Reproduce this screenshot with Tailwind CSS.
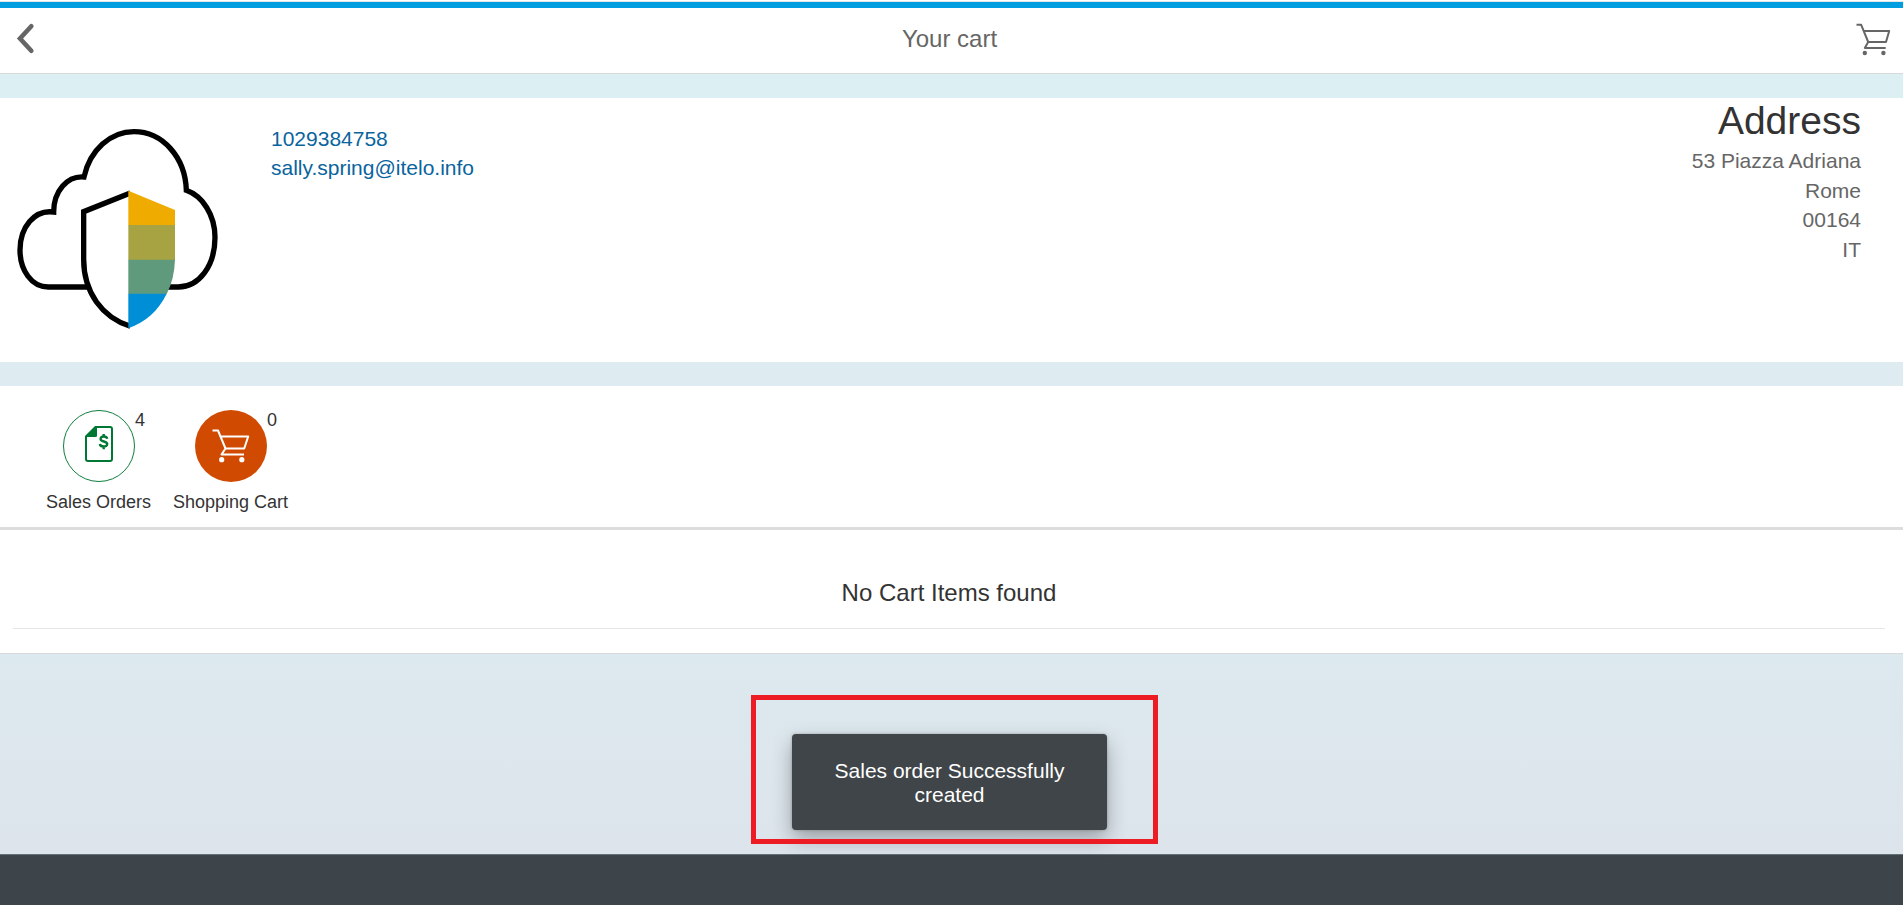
<!DOCTYPE html>
<html lang="en">
<head>
<meta charset="utf-8">
<title>Your cart</title>
<script src="https://cdn.jsdelivr.net/npm/@tailwindcss/browser@4"></script>
</head>
<body class="relative flex h-[905px] flex-col overflow-hidden bg-[#dde5ec] font-['Liberation_Sans',Arial,sans-serif] text-[21px] text-[#333333]">
  <div class="h-2 shrink-0 border-t border-white bg-[#009de0] shadow-[inset_0_1px_0_#e5e5e5]"></div>
  <header class="flex h-[66px] shrink-0 items-center justify-between border-b border-[#d9d9d9] bg-white pr-3 pl-4 text-[#666666]">
    <svg class="mb-[3px] h-[34px] w-[34px]" viewBox="0 0 34 34" fill="none" stroke="currentColor" stroke-width="4.6" stroke-linecap="round" stroke-linejoin="miter"><path d="M15.3 4.3 4 16.5 15.3 28.7"/></svg>
    <h1 class="relative -top-0.5 -left-[3px] text-2xl">Your cart</h1>
    <svg class="mb-[3px] h-[34px] w-[36px]" viewBox="0 0 36 34" fill="none" stroke="currentColor" stroke-width="2" stroke-linejoin="round"><path d="M1.5 2.8H6.2L13.2 20H31L34.2 9H9M13.2 20 9.8 26H30.7"/><g fill="currentColor" stroke="none"><circle cx="9.8" cy="31" r="2.2"/><circle cx="28.4" cy="31" r="2.2"/></g></svg>
  </header>
  <div class="h-6 shrink-0 bg-[#dceff2]"></div>
  <section class="flex h-[264px] shrink-0 bg-white pr-[42px]">
    <svg class="mt-3 h-[240px] w-[240px] shrink-0" viewBox="0 0 720 720">
      <g fill="none" stroke="#000" stroke-width="16">
        <path d="M263 531H145C94 531 60 480 60 420C60 352 103 298 161 306C161 244 201 197 252 201C270 119 332 65 402 65C488 65 556 142 559 241C607 258 645 314 645 382C645 468 597 531 535 531H500"/>
        <path fill="#fff" d="M391 249 251 305V448C251 548 307 622 391 649"/>
      </g>
      <path fill="#f0ab00" d="M385 242 525 300V346H385Z"/>
      <path fill="#a8a342" d="M385 345H525V450H385Z"/>
      <path fill="#609a7d" d="M385 449H525Q523 508 500 552H385Z"/>
      <path fill="#008fd6" d="M385 551H500C475 603 436 636 385 655Z"/>
    </svg>
    <div class="mt-[26px] ml-[31px] flex flex-col leading-[29px] text-[#0a649d]">
      <a>1029384758</a>
      <a>sally.spring@itelo.info</a>
    </div>
    <address class="ml-auto text-right leading-[29.6px] text-[#666666] not-italic">
      <h2 class="h-12 text-[39px] leading-[45px] text-[#333333]">Address</h2>
      <p>53 Piazza Adriana</p>
      <p>Rome</p>
      <p>00164</p>
      <p>IT</p>
    </address>
  </section>
  <div class="h-6 shrink-0 bg-[#deecf1]"></div>
  <nav class="flex h-36 shrink-0 gap-[22px] border-b-3 border-[#dddddd] bg-white pt-6 pl-[46px] text-lg leading-5">
    <div class="relative flex w-[105px] flex-col items-center">
      <div class="flex size-[72px] items-center justify-center rounded-full border border-[#107e3e]">
        <svg class="mb-1 h-9 w-7" viewBox="0 0 28 36" fill="none" stroke="#007833" stroke-width="2"><path d="M11 1H25Q27 1 27 3V33Q27 35 25 35H3Q1 35 1 33V11"/><path fill="#007833" stroke="none" d="M10 0H12V9.500Q12 11 10.500 11H0V10Z"/><path d="M22.200 12.800C21.500 9.900 15.600 9.600 15.600 12.900C15.600 16.300 22.200 14.700 22.200 18C22.200 21.400 15.300 21.300 14.800 18M18.700 8V11M18.700 20V23.300" stroke-width="2.400"/></svg>
      </div>
      <span class="absolute top-0 left-[89px]">4</span>
      <span class="mt-[10px] whitespace-nowrap">Sales Orders</span>
    </div>
    <div class="relative flex w-[115px] flex-col items-center">
      <div class="flex size-[72px] items-center justify-center rounded-full bg-[#d04a02]">
        <svg class="h-[34px] w-[38px]" viewBox="0 0 38 34" fill="none" stroke="#fff" stroke-width="2" stroke-linejoin="round"><path d="M.500 1.500H6L13.500 19.500H32.200L36.200 7.500H9M13.500 19.500 9.500 25.500H32"/><g fill="#fff" stroke="none"><circle cx="9.700" cy="30.700" r="2.600"/><circle cx="29.800" cy="30.700" r="2.600"/></g></svg>
      </div>
      <span class="absolute top-0 left-[94px]">0</span>
      <span class="mt-[10px] whitespace-nowrap">Shopping Cart</span>
    </div>
  </nav>
  <main class="h-[124px] shrink-0 border-b border-[#d9d9d9] bg-white pr-[18px] pl-[13px]">
    <p class="flex h-[99px] items-center justify-center border-b border-[#e5e5e5] pt-[27px] text-2xl">No Cart Items found</p>
  </main>
  <div class="h-[200px] shrink-0 bg-linear-to-b from-[#dce9ee] to-[#dde4ec]"></div>
  <footer class="flex-1 border-t border-[#617178] bg-[#3d444a]"></footer>

  <div class="absolute top-[734px] left-[792px] flex h-24 w-[315px] items-center justify-center rounded-[4px] bg-[#3f4548] px-9 pt-0.5 text-center leading-6 text-white shadow-[0_9px_20px_rgba(0,0,0,0.3),0_0_3px_rgba(0,0,0,0.25)]">Sales order Successfully created</div>
  <div class="absolute top-[695px] left-[751px] h-[149px] w-[407px] border-5 border-[#ed1c24]"></div>
</body>
</html>
